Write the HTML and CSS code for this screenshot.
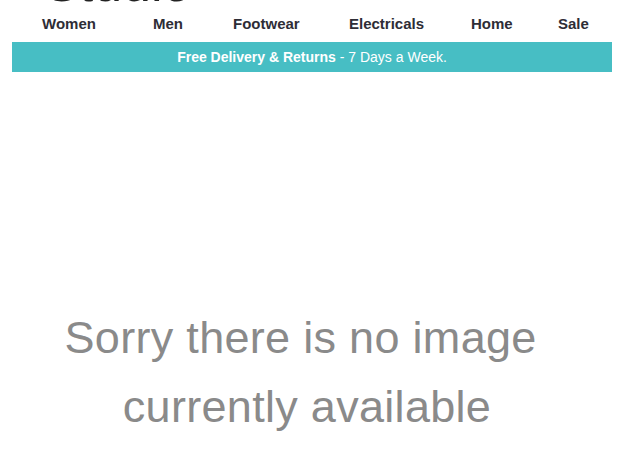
FILE: index.html
```html
<!DOCTYPE html>
<html lang="en">
<head>
<meta charset="utf-8">
<title>Studio</title>
<link rel="stylesheet" href="styles.css">
</head>
<body>
<div class="page">
  <div class="logo-strip"><div class="logo">Studio</div></div>
  <nav class="nav">
    <a class="nav-item">Women</a>
    <a class="nav-item">Men</a>
    <a class="nav-item">Footwear</a>
    <a class="nav-item">Electricals</a>
    <a class="nav-item">Home</a>
    <a class="nav-item">Sale</a>
  </nav>
  <div class="banner"><strong>Free Delivery &amp; Returns</strong> - 7 Days a Week.</div>
  <div class="noimage">
    <span class="line">Sorry there is no image&nbsp;</span>
    <span class="line">currently available</span>
  </div>
</div>
</body>
</html>
```

FILE: styles.css
```css
html, body {
  margin: 0;
  padding: 0;
  background: #ffffff;
}
.page {
  width: 600px;
  margin-left: 12px;
  font-family: "Liberation Sans", Arial, sans-serif;
}
.logo-strip {
  height: 3px;
  overflow: hidden;
}
.logo {
  margin-top: -43px;
  margin-left: 32px;
  font-size: 52px;
  line-height: 52px;
  font-weight: normal;
  color: #222222;
}
.nav {
  display: grid;
  grid-template-columns: 111px 80px 116px 122px 87px auto;
  padding: 12px 0 9px 30px;
  line-height: 18px;
}
.nav-item {
  font-size: 15px;
  font-weight: bold;
  color: #2e2d36;
  white-space: nowrap;
}
.banner {
  height: 30px;
  background: #47bec4;
  color: #ffffff;
  font-size: 14px;
  line-height: 30px;
  text-align: center;
}
.banner strong {
  font-weight: bold;
}
.noimage {
  display: flex;
  flex-direction: column;
  align-items: center;
  padding-top: 231px;
  padding-right: 10px;
  color: #8a8a8a;
  font-size: 45px;
  line-height: 69px;
  letter-spacing: 0.3px;
}
.line {
  white-space: pre;
}
```
